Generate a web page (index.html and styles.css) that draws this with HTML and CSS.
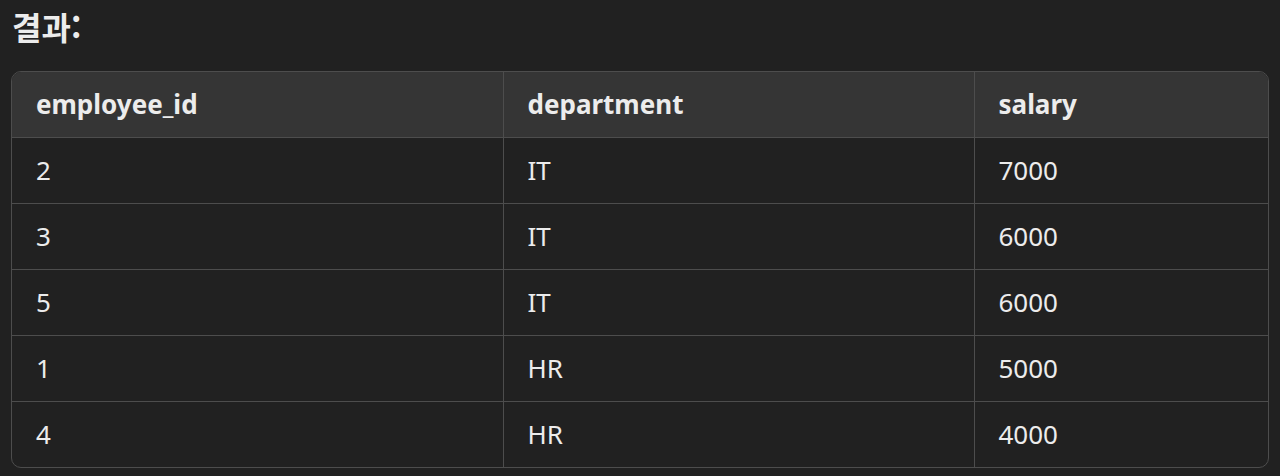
FILE: index.html
```html
<!DOCTYPE html>
<html lang="ko">
<head>
<meta charset="utf-8">
<link rel="stylesheet" href="styles.css">
</head>
<body>
<h3 class="title">결과:</h3>
<div class="wrap">
<table class="grid">
<colgroup><col class="c1"><col class="c2"><col class="c3"></colgroup>
<thead>
<tr><th>employee_id</th><th>department</th><th>salary</th></tr>
</thead>
<tbody>
<tr><td>2</td><td>IT</td><td>7000</td></tr>
<tr><td>3</td><td>IT</td><td>6000</td></tr>
<tr><td>5</td><td>IT</td><td>6000</td></tr>
<tr><td>1</td><td>HR</td><td>5000</td></tr>
<tr><td>4</td><td>HR</td><td>4000</td></tr>
</tbody>
</table>
</div>
</body>
</html>
```
FILE: styles.css
```css
html, body {
  margin: 0;
  padding: 0;
  background: #212121;
}
body {
  font-family: "Noto Sans", "Noto Sans CJK KR", sans-serif;
  color: #ececec;
  padding: 0 12px 0 11px;
}
.title {
  margin: 0;
  height: 71px;
  padding: 5px 0 0 1px;
  box-sizing: border-box;
  font-size: 32px;
  font-weight: 700;
  line-height: 42px;
  font-family: "Noto Sans CJK KR", "Noto Sans", sans-serif;
}
.wrap {
  width: 1258px;
  border: 1px solid #4d4d4d;
  border-radius: 10px;
  overflow: hidden;
  box-sizing: border-box;
}
.grid {
  width: 100%;
  border-collapse: collapse;
  table-layout: fixed;
  font-size: 26px;
}
.c1 { width: 491px; }
.c2 { width: 471px; }
.c3 { width: auto; }
.grid th, .grid td {
  height: 66px;
  padding: 0 0 0 24px;
  text-align: left;
  vertical-align: middle;
  border: 1px solid #4d4d4d;
  box-sizing: border-box;
  line-height: 30px;
}
.grid tr:first-child th { border-top: none; }
.grid tbody tr:last-child td { border-bottom: none; }
.grid th:first-child, .grid td:first-child { border-left: none; }
.grid th:last-child, .grid td:last-child { border-right: none; }
.grid th {
  height: 65px;
  background: #353535;
  font-weight: 700;
}
.grid td {
  font-weight: 400;
}
```
